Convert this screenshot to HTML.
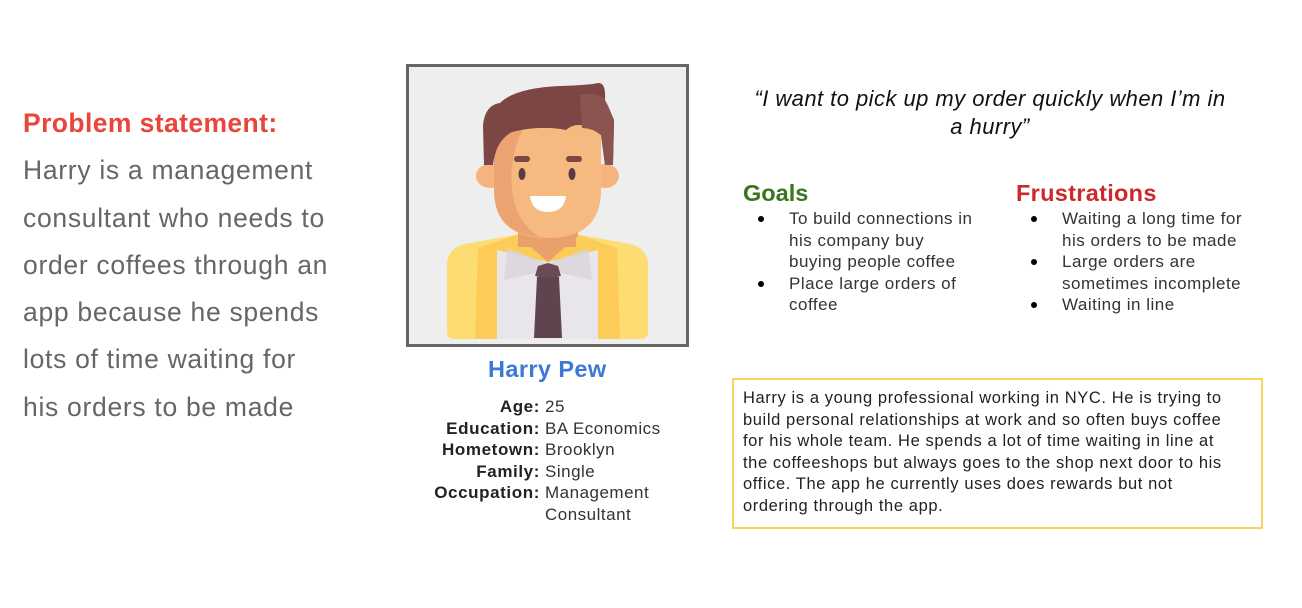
<!DOCTYPE html>
<html><head><meta charset="utf-8"><style>
body{margin:0;width:1302px;height:608px;background:#fff;position:relative;overflow:hidden;font-family:"Liberation Sans",sans-serif}
.a{position:absolute;white-space:nowrap}
.ps{left:23px;top:100px;font-size:26.5px;letter-spacing:0.7px;line-height:47.3px;color:#666}
.ps b{color:#e8453c;font-weight:bold;letter-spacing:0.4px}
.d{position:absolute;font-size:17px;letter-spacing:0.5px;line-height:21.5px;color:#222;white-space:nowrap}
.q{position:absolute;left:730px;width:520px;top:85px;text-align:center;font-style:italic;font-size:22px;letter-spacing:0.45px;line-height:28px;color:#111}
ul{margin:0;padding:0;list-style:none}
li{position:relative;padding-left:46px}
li:before{content:"";position:absolute;left:15px;top:8px;width:6px;height:6px;border-radius:50%;background:#000}
</style></head><body>
<div class="a ps"><b>Problem statement:</b><br>Harry is a management<br>consultant who needs to<br>order coffees through an<br>app because he spends<br>lots of time waiting for<br>his orders to be made</div>

<svg class="a" style="left:0;top:0" width="1302" height="608">
<rect x="407.5" y="65.5" width="280" height="280" fill="#eeeeee" stroke="#666" stroke-width="3"/>
<path d="M447 262 Q449 248 465 244 L520 234 L575 234 L630 244 Q646 248 648 262 L648 332 Q648 339 640 339 L455 339 Q447 339 447 332Z" fill="#fddc72"/>
<path d="M478 248 L520 234 L575 234 L617 248 L620 339 L475 339Z" fill="#fdcb57"/>
<path d="M497 250 L548 262 L598 250 L598 339 L497 339Z" fill="#e8e6eb"/>
<path d="M518 236 L548 262 L578 236 L578 232 L518 232Z" fill="#e9a06b"/>
<path d="M508 248 L548 264 L588 248 L592 280 L548 270 L504 280Z" fill="#d8d5da" opacity=".8"/>
<path d="M538 266 L548 263 L558 266 L561 276 L548 279 L535 276Z" fill="#6a4b55"/>
<path d="M537 277 L559 277 L562 338 L534 338Z" fill="#5f4450"/>
<rect x="518" y="212" width="58" height="35" fill="#e9a06b"/>
<ellipse cx="490" cy="176" rx="14" ry="12" fill="#f4b37f"/>
<ellipse cx="605" cy="176" rx="14" ry="12" fill="#f4b37f"/>
<path d="M494 140 Q494 120 515 117 L580 117 Q601 120 601 140 L601 190 Q601 238 548 238 Q494 238 494 190Z" fill="#f6b97f"/>
<path d="M494 140 Q494 120 515 117 L530 117 Q508 150 512 190 Q515 222 540 237 Q494 233 494 190Z" fill="#eda272"/>
<path d="M483 125 Q485 105 500 103 Q515 88 560 86 Q590 85 598 83 Q606 82 605 100 Q610 110 614 120 L613 165 L605 165 L601 135 Q580 118 566 130 Q540 125 512 132 Q496 140 493 165 L484 165Z" fill="#7b4644"/>
<path d="M580 95 Q600 92 605 100 Q612 112 614 125 L613 165 L605 165 L601 135 Q592 128 582 128Z" fill="#8c5450"/>
<rect x="514" y="156" width="16" height="6" rx="3" fill="#7b4644"/>
<rect x="566" y="156" width="16" height="6" rx="3" fill="#7b4644"/>
<ellipse cx="522" cy="174" rx="3.5" ry="6" fill="#5a3a44"/>
<ellipse cx="572" cy="174" rx="3.5" ry="6" fill="#5a3a44"/>
<path d="M530 196 L566 196 Q564 212 548 212 Q532 212 530 196Z" fill="#fff"/>
<rect x="733" y="379" width="529" height="149" fill="none" stroke="#f8d35e" stroke-width="2"/>
</svg>

<div class="a" style="left:488px;top:356px;font-size:23.5px;letter-spacing:0.4px;font-weight:bold;color:#3d78d8">Harry Pew</div>
<div class="d" style="left:400px;top:396px;width:140px;text-align:right;font-weight:bold;letter-spacing:0.6px">Age:<br>Education:<br>Hometown:<br>Family:<br>Occupation:</div>
<div class="d" style="left:545px;top:396px;color:#333">25<br>BA Economics<br>Brooklyn<br>Single<br>Management<br>Consultant</div>

<div class="q">“I want to pick up my order quickly when I’m in<br>a hurry”</div>

<div class="a" style="left:743px;top:180px;font-size:23.5px;font-weight:bold;color:#38761d">Goals</div>
<div class="a" style="left:1016px;top:180px;font-size:23.5px;letter-spacing:0.3px;font-weight:bold;color:#cc2a2a">Frustrations</div>
<ul class="d" style="left:743px;top:208px;color:#333"><li>To build connections in<br>his company buy<br>buying people coffee</li><li>Place large orders of<br>coffee</li></ul>
<ul class="d" style="left:1016px;top:208px;color:#333"><li>Waiting a long time for<br>his orders to be made</li><li>Large orders are<br>sometimes incomplete</li><li>Waiting in line</li></ul>

<div class="d" style="left:743px;top:388px;font-size:16.5px;letter-spacing:0.6px;color:#222">Harry is a young professional working in NYC. He is trying to<br>build personal relationships at work and so often buys coffee<br>for his whole team. He spends a lot of time waiting in line at<br>the coffeeshops but always goes to the shop next door to his<br>office. The app he currently uses does rewards but not<br>ordering through the app.</div>
</body></html>
